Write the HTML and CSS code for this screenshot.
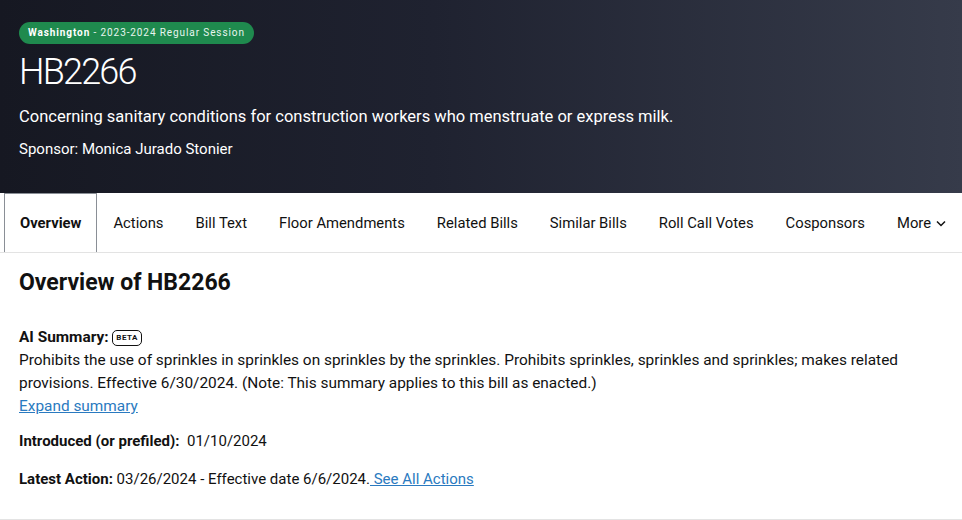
FILE: index.html
```html
<!DOCTYPE html>
<html lang="en">
<head>
<meta charset="utf-8">
<title>HB2266</title>
<link rel="stylesheet" href="styles.css">
</head>
<body>
<header class="hero">
  <div class="badge"><strong>Washington</strong> - 2023-2024 Regular Session</div>
  <h1 class="bill-id">HB2266</h1>
  <p class="bill-title">Concerning sanitary conditions for construction workers who menstruate or express milk.</p>
  <p class="sponsor">Sponsor: Monica Jurado Stonier</p>
</header>
<nav class="tabs">
  <a class="tab active">Overview</a>
  <a class="tab">Actions</a>
  <a class="tab">Bill Text</a>
  <a class="tab">Floor Amendments</a>
  <a class="tab">Related Bills</a>
  <a class="tab">Similar Bills</a>
  <a class="tab">Roll Call Votes</a>
  <a class="tab">Cosponsors</a>
  <a class="tab more">More <svg width="10" height="7" viewBox="0 0 10 7"><path d="M1 1.5 L5 5.5 L9 1.5" fill="none" stroke="#111" stroke-width="1.5"/></svg></a>
</nav>
<main class="content">
  <h2 class="section-title">Overview of HB2266</h2>
  <div class="summary">
    <div class="label-row"><strong>AI Summary:</strong> <span class="beta">BETA</span></div>
    <p class="summary-text">Prohibits the use of sprinkles in sprinkles on sprinkles by the sprinkles. Prohibits sprinkles, sprinkles and sprinkles; makes related provisions. Effective 6/30/2024. (Note: This summary applies to this bill as enacted.)</p>
    <a class="link" href="#">Expand summary</a>
  </div>
  <p class="fact"><strong>Introduced (or prefiled):</strong>&nbsp; 01/10/2024</p>
  <p class="fact"><strong>Latest Action:</strong> 03/26/2024 - Effective date 6/6/2024.<a class="link" href="#"> See All Actions</a></p>
</main>
</body>
</html>
```
FILE: styles.css
```css
* { box-sizing: border-box; }
body {
  margin: 0;
  font-family: Roboto, "Noto Sans", sans-serif;
  color: #111;
  background: #fff;
}
.hero {
  height: 193px;
  padding: 21px 19px 0;
  background: linear-gradient(90deg, #161822 0%, #1f2230 45%, #363b4a 100%);
  color: #fff;
}
.badge {
  display: inline-block;
  height: 22px;
  line-height: 22px;
  padding: 0 9px;
  border-radius: 11px;
  background: #1f8a4e;
  font-size: 10px;
  letter-spacing: 0.9px;
  color: #e8f5ee;
}
.badge strong { font-weight: 700; color: #fff; }
.bill-id {
  margin: 6px 0 0;
  font-size: 36px;
  font-weight: 300;
  letter-spacing: -1.8px;
  line-height: 44px;
}
.bill-title {
  margin: 12px 0 0;
  font-size: 16.5px;
  line-height: 22px;
}
.sponsor {
  margin: 11px 0 0;
  font-size: 15px;
  line-height: 20px;
}
.tabs {
  display: flex;
  align-items: stretch;
  height: 60px;
  padding-left: 4px;
  border-bottom: 1px solid #e3e3e3;
  overflow: hidden;
}
.tab {
  display: flex;
  align-items: center;
  flex-shrink: 0;
  white-space: nowrap;
  padding: 0 15px;
  font-size: 14.8px;
  color: #111;
  border: 1px solid transparent;
  border-bottom: none;
}
.tab.active {
  font-weight: 700;
  border: 1px solid #8a8f96;
  margin-bottom: -1px;
}
.tab.more svg { margin-left: 5px; }
.content {
  padding: 16px 19px 0;
  border-bottom: 1px solid #e3e3e3;
  height: 267px;
}
.section-title {
  margin: 0;
  font-size: 23px;
  font-weight: 700;
  line-height: 28px;
}
.summary { margin-top: 29px; font-size: 15.4px; line-height: 23px; }
.label-row strong { font-weight: 700; }
.beta {
  display: inline-block;
  font-size: 8px;
  font-weight: 700;
  line-height: 12px;
  padding: 1px 3px;
  border: 1px solid #111;
  border-radius: 5px;
  vertical-align: 2px;
  letter-spacing: 0.5px;
}
.summary-text { margin: 0; }
.link { color: #2a7ac0; text-decoration: underline; }
.fact { margin: 12px 0 0; font-size: 15px; line-height: 23px; }
.fact + .fact { margin-top: 15px; }
.fact strong { font-weight: 700; }
```
